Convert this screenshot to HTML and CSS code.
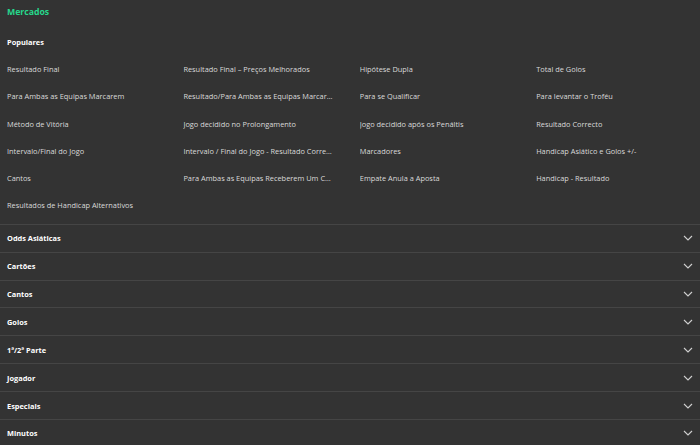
FILE: index.html
```html
<!DOCTYPE html>
<html lang="pt">
<head>
<meta charset="utf-8">
<title>Mercados</title>
<link rel="stylesheet" href="styles.css">
</head>
<body>
<div class="page">
  <div class="title">Mercados</div>
  <section class="popular">
    <div class="sub">Populares</div>
    <div class="grid">
      <div class="item">Resultado Final</div>
      <div class="item">Resultado Final – Preços Melhorados</div>
      <div class="item">Hipótese Dupla</div>
      <div class="item">Total de Golos</div>
      <div class="item">Para Ambas as Equipas Marcarem</div>
      <div class="item">Resultado/Para Ambas as Equipas Marcarem</div>
      <div class="item">Para se Qualificar</div>
      <div class="item">Para levantar o Troféu</div>
      <div class="item">Método de Vitória</div>
      <div class="item">Jogo decidido no Prolongamento</div>
      <div class="item">Jogo decidido após os Penáltis</div>
      <div class="item">Resultado Correcto</div>
      <div class="item">Intervalo/Final do Jogo</div>
      <div class="item">Intervalo / Final do Jogo - Resultado Correcto</div>
      <div class="item">Marcadores</div>
      <div class="item">Handicap Asiático e Golos +/-</div>
      <div class="item">Cantos</div>
      <div class="item">Para Ambas as Equipas Receberem Um Cartão</div>
      <div class="item">Empate Anula a Aposta</div>
      <div class="item">Handicap - Resultado</div>
      <div class="item">Resultados de Handicap Alternativos</div>
    </div>
  </section>
  <div class="acc"><span>Odds Asiáticas</span><svg class="chev" viewBox="0 0 10 6"><path d="M1 1L5 5L9 1"/></svg></div>
  <div class="acc"><span>Cartões</span><svg class="chev" viewBox="0 0 10 6"><path d="M1 1L5 5L9 1"/></svg></div>
  <div class="acc"><span>Cantos</span><svg class="chev" viewBox="0 0 10 6"><path d="M1 1L5 5L9 1"/></svg></div>
  <div class="acc"><span>Golos</span><svg class="chev" viewBox="0 0 10 6"><path d="M1 1L5 5L9 1"/></svg></div>
  <div class="acc"><span>1ª/2ª Parte</span><svg class="chev" viewBox="0 0 10 6"><path d="M1 1L5 5L9 1"/></svg></div>
  <div class="acc"><span>Jogador</span><svg class="chev" viewBox="0 0 10 6"><path d="M1 1L5 5L9 1"/></svg></div>
  <div class="acc"><span>Especiais</span><svg class="chev" viewBox="0 0 10 6"><path d="M1 1L5 5L9 1"/></svg></div>
  <div class="acc"><span>Minutos</span><svg class="chev" viewBox="0 0 10 6"><path d="M1 1L5 5L9 1"/></svg></div>
</div>
</body>
</html>
```
FILE: styles.css
```css
html, body {
  margin: 0;
  padding: 0;
  background: #333333;
}
body {
  font-family: "Open Sans", "Noto Sans", sans-serif;
  font-size: 7.4px;
  color: #dadada;
  overflow: hidden;
}
.page {
  width: 700px;
}
.title {
  height: 25px;
  line-height: 25px;
  padding-left: 7px;
  font-weight: 700;
  font-size: 8.7px;
  color: #26d88c;
}
.sub {
  height: 31px;
  line-height: 12px;
  padding-top: 11px;
  box-sizing: border-box;
  padding-left: 7px;
  font-weight: 700;
  font-size: 7.4px;
  color: #ffffff;
}
.grid {
  display: grid;
  grid-template-columns: repeat(4, 176.4px);
  grid-auto-rows: 27.3px;
  padding-left: 7px;
  padding-bottom: 4px;
}
.item {
  line-height: 27.3px;
  padding-right: 25px;
  white-space: nowrap;
  overflow: hidden;
  text-overflow: ellipsis;
}
.acc {
  height: 27.9px;
  box-sizing: border-box;
  border-top: 1px solid #454545;
  display: flex;
  align-items: center;
  justify-content: space-between;
  padding: 0 7px 0 7px;
  font-weight: 700;
  color: #ffffff;
}
.chev {
  width: 10px;
  height: 6px;
  fill: none;
  stroke: #d0d0d0;
  stroke-width: 1.1;
}
```
